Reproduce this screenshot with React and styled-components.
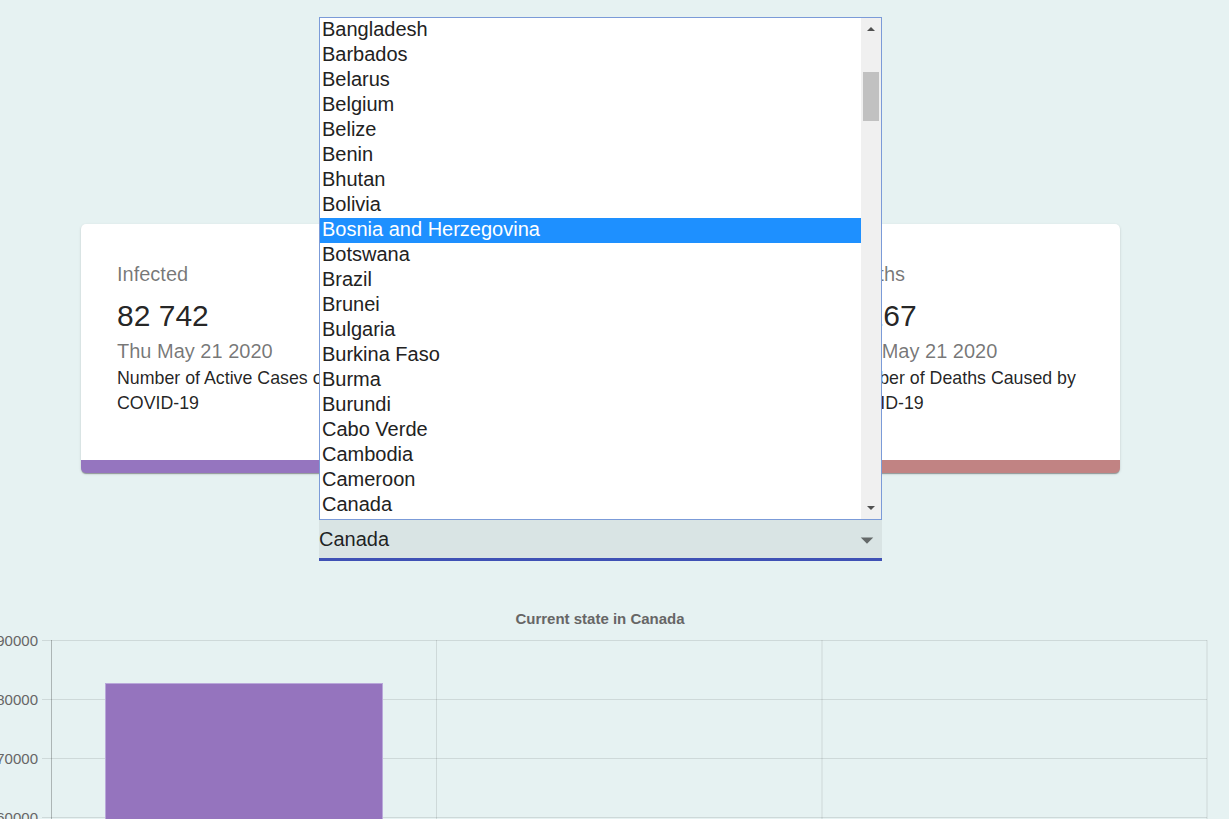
import React from "react";
import styled, { createGlobalStyle } from "styled-components";

const GlobalStyle = createGlobalStyle`
  html, body {
    margin: 0;
    padding: 0;
    background: #e6f2f2;
    overflow: hidden;
  }
  body {
    font-family: "Liberation Sans", Arial, Helvetica, sans-serif;
  }
`;

const countries = [
  "Bangladesh",
  "Barbados",
  "Belarus",
  "Belgium",
  "Belize",
  "Benin",
  "Bhutan",
  "Bolivia",
  "Bosnia and Herzegovina",
  "Botswana",
  "Brazil",
  "Brunei",
  "Bulgaria",
  "Burkina Faso",
  "Burma",
  "Burundi",
  "Cabo Verde",
  "Cambodia",
  "Cameroon",
  "Canada",
];

const stats = [
  {
    id: "infected",
    title: "Infected",
    value: "82 742",
    text: "Number of Active Cases of COVID-19",
    accent: "#9575bf",
  },
  {
    id: "recovered",
    title: "Recovered",
    value: "42 892",
    text: "Number of Recoveries from COVID-19",
    accent: "#86b98a",
  },
  {
    id: "deaths",
    title: "Deaths",
    value: "6 267",
    text: "Number of Deaths Caused by COVID-19",
    accent: "#c18383",
  },
];

const App = () => {
  return (
    <>
      <GlobalStyle />
      <Page>
        {/* ===================== cards ===================== */}
        <Cards>
          {stats.map((item) => (
            <Card key={item.id} $accent={item.accent}>
              <Label>{item.title}</Label>
              <Count>{item.value}</Count>
              <Label as="div" $tight>
                Thu May 21 2020
              </Label>
              <Desc>{item.text}</Desc>
            </Card>
          ))}
        </Cards>

        {/* ===================== country picker ===================== */}
        <Picker>
          <ListBox>
            <Options>
              {countries.map((name) => (
                <Option key={name} $active={name === "Bosnia and Herzegovina"}>
                  {name}
                </Option>
              ))}
            </Options>
            <ScrollBar>
              <Arrow $up />
              <Thumb />
              <Arrow />
            </ScrollBar>
          </ListBox>
          <SelectBox>
            Canada
            <Caret viewBox="0 0 24 24">
              <path d="M7 10l5 5 5-5z" />
            </Caret>
          </SelectBox>
        </Picker>

        {/* ===================== chart ===================== */}
        <ChartWrap>
          <svg width="1229" height="224" viewBox="0 0 1229 224">
            <text
              x="600"
              y="29"
              textAnchor="middle"
              fontSize="15"
              fontWeight="bold"
              fill="#666"
              fontFamily="Liberation Sans, Arial, sans-serif"
            >
              Current state in Canada
            </text>
            {[45.5, 104.5, 163.5, 222.5].map((y) => (
              <line key={y} x1="42" x2="1207" y1={y} y2={y} stroke="rgba(0,0,0,0.1)" />
            ))}
            {[436.5, 822, 1207].map((x) => (
              <line key={x} x1={x} x2={x} y1="45" y2="224" stroke="rgba(0,0,0,0.1)" />
            ))}
            <line x1="51.5" x2="51.5" y1="45" y2="224" stroke="rgba(0,0,0,0.25)" />
            <rect x="105.5" y="88.5" width="277" height="140" fill="#9574be" stroke="#b9a8da" />
            {["90000", "80000", "70000", "60000"].map((label, i) => (
              <text
                key={label}
                x="38"
                y={51 + i * 59}
                textAnchor="end"
                fontSize="15"
                fill="#666"
                fontFamily="Liberation Sans, Arial, sans-serif"
              >
                {label}
              </text>
            ))}
          </svg>
        </ChartWrap>
      </Page>
    </>
  );
};

export default App;

const Page = styled.div`
  width: 1201px;
  display: flex;
  flex-direction: column;
  align-items: center;
  padding-top: 224px;
`;

const Cards = styled.div`
  width: 1039px;
  display: flex;
  gap: 48px;
`;

const Card = styled.div`
  flex: 1;
  box-sizing: border-box;
  height: 249px;
  padding: 35px 36px 0;
  background: #fff;
  border-radius: 5px;
  border-bottom: 13px solid ${(p) => p.$accent};
  box-shadow: 0px 2px 1px -1px rgba(0, 0, 0, 0.2), 0px 1px 1px 0px rgba(0, 0, 0, 0.14),
    0px 1px 3px 0px rgba(0, 0, 0, 0.12);
`;

const Label = styled.p`
  margin: 0 0 ${(p) => (p.$tight ? "0" : "7px")};
  font-size: 20px;
  line-height: 30px;
  color: rgba(0, 0, 0, 0.54);
`;

const Count = styled.h5`
  margin: 0;
  font-size: 30px;
  font-weight: 400;
  line-height: 40px;
  color: rgba(0, 0, 0, 0.87);
`;

const Desc = styled.p`
  margin: 0;
  font-size: 17.8px;
  line-height: 25px;
  color: rgba(0, 0, 0, 0.87);
`;

const Picker = styled.div`
  position: relative;
  width: 563px;
  margin-top: 47px;
`;

const ListBox = styled.div`
  position: absolute;
  left: 0;
  bottom: 100%;
  box-sizing: border-box;
  width: 563px;
  height: 503px;
  border: 1px solid #7b9bd8;
  background: #fff;
  display: flex;
  z-index: 2;
`;

const Options = styled.div`
  flex: 1;
  overflow: hidden;
`;

const Option = styled.div`
  height: 23px;
  padding: 0 0 2px 2px;
  line-height: 23px;
  font-size: 20px;
  white-space: nowrap;
  color: ${(p) => (p.$active ? "#fff" : "#222")};
  background: ${(p) => (p.$active ? "#1e90ff" : "transparent")};
`;

const ScrollBar = styled.div`
  width: 20px;
  background: #f0f0f0;
  display: flex;
  flex-direction: column;
  align-items: center;
`;

const Arrow = styled.div`
  width: 0;
  height: 0;
  margin: ${(p) => (p.$up ? "9px 0 0" : "auto 0 9px")};
  border-left: 4px solid transparent;
  border-right: 4px solid transparent;
  ${(p) => (p.$up ? "border-bottom: 4px solid #505050;" : "border-top: 4px solid #505050;")}
`;

const Thumb = styled.div`
  width: 16px;
  height: 49px;
  margin-top: 41px;
  background: #c1c1c1;
`;

const SelectBox = styled.div`
  position: relative;
  box-sizing: border-box;
  height: 41px;
  padding-top: 1px;
  display: flex;
  align-items: center;
  font-size: 20px;
  color: rgba(0, 0, 0, 0.87);
  background: rgba(0, 0, 0, 0.055);
  border-bottom: 3px solid #3f51b5;
`;

const Caret = styled.svg`
  position: absolute;
  right: 0;
  top: 5px;
  width: 30px;
  height: 30px;
  fill: rgba(0, 0, 0, 0.54);
`;

const ChartWrap = styled.div`
  align-self: flex-start;
  width: 1229px;
  height: 224px;
  margin-top: 34px;
  svg {
    display: block;
  }
`;
